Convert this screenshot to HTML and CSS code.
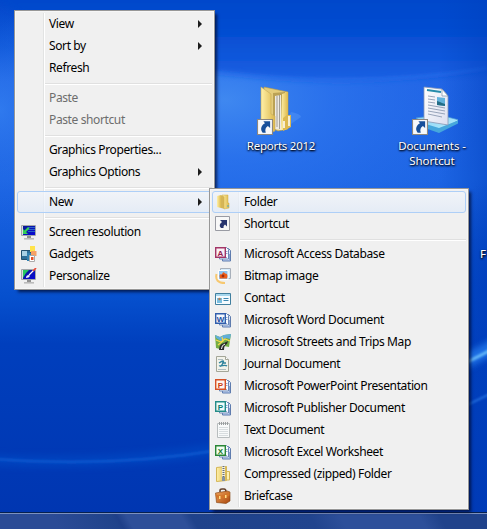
FILE: index.html
```html
<!DOCTYPE html>
<html lang="en">
<head>
<meta charset="utf-8">
<title>Desktop</title>
<link rel="stylesheet" href="styles.css">
</head>
<body>
<svg width="0" height="0" class="defs" aria-hidden="true">
  <defs>
    <linearGradient id="gold" x1="0" x2="1"><stop offset="0" stop-color="#fff0a8"/><stop offset="1" stop-color="#dcb84c"/></linearGradient>
    <linearGradient id="page" x1="0" y1="0" x2="1" y2="1"><stop offset="0" stop-color="#fff"/><stop offset="1" stop-color="#dcdff0"/></linearGradient>
    <linearGradient id="screen" x1="0" y1="0" x2="1" y2="1"><stop offset="0" stop-color="#0b1b92"/><stop offset="1" stop-color="#0909d8"/></linearGradient>
    <linearGradient id="tray" x1="0" y1="0" x2="1" y2="1"><stop offset="0" stop-color="#88cdf5"/><stop offset="1" stop-color="#b7f1fb"/></linearGradient>
    <linearGradient id="leather" x1="0" y1="0" x2="1" y2="1"><stop offset="0" stop-color="#f1a55b"/><stop offset="1" stop-color="#a9460d"/></linearGradient>
    <symbol id="monitor" viewBox="0 0 16 16">
      <path d="M.5 1.500h14v10h-14z" fill="#d9dcde" stroke="#a4a8aa"/>
      <path d="M2 2h12v9H2z" fill="url(#screen)"/>
      <path d="M6 12h4v2H6z" fill="#919191"/><path d="M3 14h10v1.600H3z" fill="#bbb"/>
    </symbol>
    <symbol id="office" viewBox="0 0 16 16">
      <path d="M7.500 2.500h6l2 2v10.500h-8z" fill="#d9e5f8" stroke="#5f7cae"/>
      <path d="M4.500 1.500h7l2 2v9.500h-9z" fill="#f8fbff" stroke="#6c88b7"/>
      <path d="M11 5.500h1.500M11 7.500h1.500M7 11.500h5M14.500 8v6M8 14.500h7" stroke="#8da6d2"/>
    </symbol>
    <symbol id="link" viewBox="0 0 15 15">
      <path d="M.5.5h14v14H.5z" fill="#f7f8fb" stroke="#8d8780"/>
      <path d="M6 2h6.300v6.500L10.200 6.500C8 8 7.300 9.700 8.200 12.800H5.300C2.600 9.500 4 6 7.500 4z" fill="#174f9b"/>
    </symbol>
  </defs>
</svg>
<main class="desktop">
  <svg class="wallpaper" viewBox="0 0 487 529" preserveAspectRatio="none" aria-hidden="true">
    <defs>
      <linearGradient id="base" x1="0" y1="0" x2="0" y2="1">
        <stop offset="0" stop-color="#0044c8"/><stop offset=".09" stop-color="#0750d4"/><stop offset=".155" stop-color="#2063e4"/><stop offset=".34" stop-color="#1d65e4"/><stop offset=".56" stop-color="#0650ce"/><stop offset=".65" stop-color="#003fbd"/><stop offset="1" stop-color="#0035b0"/>
      </linearGradient>
      <radialGradient id="glow" gradientUnits="userSpaceOnUse" cx="0" cy="0" r="1" gradientTransform="translate(225 100) scale(260 150)">
        <stop offset="0" stop-color="#4791f3" stop-opacity=".8"/><stop offset=".4" stop-color="#2f78f0" stop-opacity=".65"/><stop offset="1" stop-color="#2870ed" stop-opacity="0"/>
      </radialGradient>
      <radialGradient id="left" gradientUnits="userSpaceOnUse" cx="0" cy="0" r="1" gradientTransform="translate(0 110) scale(90 120)">
        <stop offset="0" stop-color="#3480f1" stop-opacity=".75"/><stop offset="1" stop-color="#1c63df" stop-opacity="0"/>
      </radialGradient>
      <linearGradient id="rightShade"><stop offset=".9" stop-color="#0044c0" stop-opacity="0"/><stop offset="1" stop-color="#0040bd" stop-opacity=".5"/></linearGradient>
      <radialGradient id="corner" gradientUnits="userSpaceOnUse" cx="0" cy="0" r="1" gradientTransform="translate(500 290) scale(75 110)">
        <stop offset="0" stop-color="#003dbb" stop-opacity=".9"/><stop offset="1" stop-color="#003dbb" stop-opacity="0"/>
      </radialGradient>
      <linearGradient id="cap" x1="0" y1="0" x2="0" y2="1"><stop offset="0" stop-color="#0043c7"/><stop offset=".5" stop-color="#044dd1"/><stop offset="1" stop-color="#1a60e3"/></linearGradient>
      <filter id="soft" x="-20%" y="-100%" width="140%" height="300%"><feGaussianBlur stdDeviation="3"/></filter>
      <filter id="fine" x="-20%" y="-100%" width="140%" height="300%"><feGaussianBlur stdDeviation=".8"/></filter>
    </defs>
    <path d="M0 0h487v529H0z" fill="url(#base)"/>
    <path d="M0 0h487v529H0z" fill="url(#glow)"/>
    <path d="M0 0h100v260H0z" fill="url(#left)"/>
    <path d="M-20-20H510V65Q370 90 243 75Q90 62-20-10Z" fill="url(#cap)" filter="url(#soft)"/>
    <path d="M215 72Q360 89 487 68" fill="none" stroke="#2d72ee" stroke-width="3" opacity=".45" filter="url(#fine)"/>
    <path d="M0 0h487v529H0z" fill="url(#rightShade)"/>
    <path d="M0 0h487v529H0z" fill="url(#corner)"/>
    <path d="M-5 460Q110 466 220 449" fill="none" stroke="#0056d0" stroke-width="12" opacity=".35" filter="url(#soft)"/>
    <path d="M-5 459Q110 468 220 450" fill="none" stroke="#1463d8" stroke-width="2" opacity=".8" filter="url(#fine)"/>
    <path d="M460 364Q478 355 500 343" fill="none" stroke="#2b83f5" stroke-width="14" opacity=".7" filter="url(#soft)"/>
    <path d="M465 363Q478 357 500 345" fill="none" stroke="#66bafa" stroke-width="3" filter="url(#fine)"/>
    <path d="M465 406Q478 400 500 389" fill="none" stroke="#2b79e5" stroke-width="2" opacity=".8" filter="url(#fine)"/>
  </svg>

  <div class="shortcut reports">
    <svg class="shortcut-icon" viewBox="0 0 48 52">
      <path d="M28 47l20-14q0-3-10-5z" fill="#79b2ff" opacity=".25"/>
      <path d="M11 3l24 5v37l-10 2-14-7z" fill="#e5cd7b" stroke="#b99b43" stroke-width=".6"/>
      <path d="M20 9l12-1v36l-12 1z" fill="#bba255"/>
      <path d="M22 12l6-1v35l-6-1z" fill="#eeeae2"/><path d="M24 12v31M26.500 11v34" stroke="#8e8b82" stroke-width=".8"/>
      <path d="M29 10l6-2v35l-2 3h-5z" fill="url(#gold)"/>
      <path d="M34 31h4v12l-8 4V34z" fill="#ddb94f"/><path d="M36 32v10M31 37v7" stroke="#fff" stroke-width="1.500"/>
      <path d="M8 3l10 7v20l4 2v15l-3 1L8 42z" fill="url(#gold)" stroke="#c6a957" stroke-width=".6"/>
      <use href="#link" x="4" y="35" width="16" height="16"/>
    </svg>
    <span>Reports 2012</span>
  </div>
  <div class="shortcut documents">
    <svg class="shortcut-icon" viewBox="0 0 48 52">
      <path d="M6 34l24-3 19 5-20 12z" fill="url(#tray)" stroke="#4a9bd2" stroke-width=".7"/>
      <path d="M9 38l20 6 20-8v3L29 49 9 42z" fill="#46a7dc"/>
      <path d="M14 3l18 2 6 7v29l-24-4z" fill="url(#page)" stroke="#8998b4" stroke-width=".8"/>
      <path d="M32 5v7h6z" fill="#fff" stroke="#788da4" stroke-width=".7"/>
      <path d="M17 6l14 2" stroke="#278caa" stroke-width="1.800"/>
      <path d="M18 12l7 1M18 15l7 1M18 18l7 1M18 21l17 3M18 24l17 3M18 27l17 3M18 30l14 3" stroke="#8290a9" stroke-width=".8"/>
      <path d="M27 13l8 1v8l-8-1z" fill="#62b2dc"/><path d="M27 17l3 1 2 1 3 1v2l-8-1z" fill="#236c86"/>
      <use href="#link" x="2" y="35" width="16" height="16"/>
    </svg>
    <span>Documents -</span>
    <span>Shortcut</span>
  </div>
  <div class="shortcut clipped"><span>F</span></div>
  <footer class="taskbar"></footer>

  <nav class="menu context">
    <div class="row"><i class="icon"></i><span>View</span><b class="arrow"></b></div>
    <div class="row"><i class="icon"></i><span>Sort by</span><b class="arrow"></b></div>
    <div class="row"><i class="icon"></i><span>Refresh</span></div>
    <hr>
    <div class="row disabled"><i class="icon"></i><span>Paste</span></div>
    <div class="row disabled"><i class="icon"></i><span>Paste shortcut</span></div>
    <hr>
    <div class="row"><i class="icon"></i><span>Graphics Properties...</span></div>
    <div class="row"><i class="icon"></i><span>Graphics Options</span><b class="arrow"></b></div>
    <hr>
    <div class="row active"><i class="icon"></i><span>New</span><b class="arrow"></b></div>
    <hr>
    <div class="row"><svg class="icon" viewBox="0 0 16 16"><use href="#monitor"/><path d="M7 3.500h7M7 5.500h7M7 7.500h7" stroke="#2a62c8"/><path d="M2 10V5l1.500 1.500L7 3l1.500 1.500L5 8l2 2z" fill="#35d055"/></svg><span>Screen resolution</span></div>
    <div class="row"><svg class="icon" viewBox="0 0 16 16"><path d="M.5 4.500h9v9h-9z" fill="#2d6e98" stroke="#22506e"/><path d="M1 5h5v5H1z" fill="#a7d0e4"/><path d="M9 0h5v6H9z" fill="#ffe34a"/><path d="M10 5h5.500v5H10z" fill="#f6a064"/><path d="M6 7h4v8H6z" fill="#3181b0"/><path d="M8.500 9.500h5v6h-5z" fill="#fff" stroke="#aaa"/><path d="M10 11h2.500v3H10z" fill="#e55025"/></svg><span>Gadgets</span></div>
    <div class="row"><svg class="icon" viewBox="0 0 16 16"><use href="#monitor"/><path d="M2 2h6L5 5l-3 5z" fill="#25c860"/><path d="M5 10q0-3 3-3l1 1q-1 2-4 2z" fill="#eef3ff"/><path d="M8 7l5-5" stroke="#fff" stroke-width="1.200"/><path d="M12 3l3-3" stroke="#ed4937" stroke-width="1.600"/></svg><span>Personalize</span></div>
  </nav>

  <nav class="menu submenu">
    <div class="row active"><svg class="icon" viewBox="0 0 16 16"><path d="M2 2l4-1v13l-4-1z" fill="url(#gold)"/><path d="M6 1l4 2v12l-4-1z" fill="#d5b557"/><path d="M7 1h6v8h1v5l-5 1V3z" fill="url(#gold)" stroke="#d0ae4b" stroke-width=".5"/><path d="M13 11v2" stroke="#49a5d0"/></svg><span>Folder</span></div>
    <div class="row"><svg class="icon" viewBox="0 0 16 16"><path d="M.5.5h14v14H.5z" fill="#f8f8f8" stroke="#999ba3"/><path d="M5 4h7v6.500L10 8.500Q8 9.500 8.500 12H6q-3-3 1-6z" fill="#27356f"/></svg><span>Shortcut</span></div>
    <hr>
    <div class="row"><svg class="icon" viewBox="0 0 16 16"><use href="#office"/><path d="M.7 1.700h9.600v9.600H.7z" fill="#faf0f5" stroke="#a33567" stroke-width="1.400"/><text x="2.600" y="9.600" class="letter access">A</text></svg><span>Microsoft Access Database</span></div>
    <div class="row"><svg class="icon" viewBox="0 0 16 16"><path d="M5.500.5h10v10h-10z" fill="#d6ecfc" stroke="#a8b0ba"/><path d="M3.500 2.500h9.500v9H3.500z" fill="#8dc4f1" stroke="#fff"/><path d="M5 10.500q-1.500-5 2-4 1-4 3-1 3.500 0 2 5z" fill="#ee5c18"/><circle cx="8" cy="8" r="1.400" fill="#9d2d15"/><path d="M1.500 6Q-.5 15 10 15" fill="none" stroke="#f7c86f" stroke-width="2"/></svg><span>Bitmap image</span></div>
    <div class="row"><svg class="icon" viewBox="0 0 16 16"><path d="M.5 3.500h15v11H.5z" fill="#f5fbff" stroke="#417f9f"/><path d="M1 4h14v2H1z" fill="#a5d6ed"/><path d="M2 8h5v5H2z" fill="#79bfe2"/><circle cx="4.500" cy="9" r="1.300" fill="#ad825f"/><path d="M8.500 8.500h5M8.500 10.500h5" stroke="#3e88b1"/></svg><span>Contact</span></div>
    <div class="row"><svg class="icon" viewBox="0 0 16 16"><use href="#office"/><path d="M.7 1.700h9.600v9.600H.7z" fill="#f4f8ff" stroke="#315eac" stroke-width="1.400"/><text x="1.700" y="9.600" class="letter word">W</text></svg><span>Microsoft Word Document</span></div>
    <div class="row"><svg class="icon" viewBox="0 0 16 16"><path d="M0 1l5 2 4-2 7-1-2 13-5-1-4 3-4-1z" fill="#74ad45"/><path d="M0 1l5 2 4-2 7-1-1 5-4-1-5 3-5-3z" fill="#61aedb"/><path d="M1 6l5 2 4-3 5 2M7 3l1 4-5 4" stroke="#f7d94f" stroke-width="1.200" fill="none"/><path d="M4 16q0-6 5-7l4-2-1 3q-3 1-3 6z" fill="#292b2a"/><path d="M6.500 15q0-4 3.500-5" stroke="#fff" fill="none"/></svg><span>Microsoft Streets and Trips Map</span></div>
    <div class="row"><svg class="icon" viewBox="0 0 16 16"><path d="M1.500.5h9l3 3v12h-12z" fill="#f3f3eb" stroke="#a4a698"/><path d="M10.500.5v3h3" fill="#fff" stroke="#a4a698"/><path d="M3 3.500h5M3 13.500h8" stroke="#aebdc0"/><path d="M4 7q6-4 4 0t-3 3q6-1 7 0M7 7h4" fill="none" stroke="#30849d" stroke-width="1.300"/></svg><span>Journal Document</span></div>
    <div class="row"><svg class="icon" viewBox="0 0 16 16"><use href="#office"/><path d="M.7 1.700h9.600v9.600H.7z" fill="#fff5ef" stroke="#d65126" stroke-width="1.400"/><text x="2.800" y="9.600" class="letter power">P</text></svg><span>Microsoft PowerPoint Presentation</span></div>
    <div class="row"><svg class="icon" viewBox="0 0 16 16"><use href="#office"/><path d="M.7 1.700h9.600v9.600H.7z" fill="#effcfa" stroke="#248c88" stroke-width="1.400"/><text x="2.800" y="9.600" class="letter publisher">P</text></svg><span>Microsoft Publisher Document</span></div>
    <div class="row"><svg class="icon" viewBox="0 0 16 16"><path d="M2.500 1.500h12v14h-12z" fill="#f8fafa" stroke="#b8bdbe"/><path d="M4 5.500h9M4 7.500h9M4 9.500h9M4 11.500h9M4 13.500h9" stroke="#cfd5d8" stroke-width=".8"/><path d="M4.500 0v3M6.500 0v3M8.500 0v3M10.500 0v3M12.500 0v3" stroke="#9a9e9f"/></svg><span>Text Document</span></div>
    <div class="row"><svg class="icon" viewBox="0 0 16 16"><use href="#office"/><path d="M.7 1.700h9.600v9.600H.7z" fill="#f3fff1" stroke="#298636" stroke-width="1.400"/><text x="2.800" y="9.600" class="letter excel">X</text></svg><span>Microsoft Excel Worksheet</span></div>
    <div class="row"><svg class="icon" viewBox="0 0 16 16"><path d="M1.500 1.500l10-1v14l-10 1z" fill="url(#gold)" stroke="#d4b657"/><path d="M11.500 5.500h3v8.500h-3z" fill="#fff1b2" stroke="#d4b657"/><path d="M8.500 0v15" stroke="#f3efd9" stroke-width="3"/><path d="M8.500 0v11" stroke="#686f79" stroke-width="2" stroke-dasharray="1 1"/><path d="M7 11h3v4H7z" fill="#8693a2"/></svg><span>Compressed (zipped) Folder</span></div>
    <div class="row"><svg class="icon" viewBox="0 0 16 16"><path d="M5 4V2.500Q5 1 7 1h2q2 0 2 3" fill="none" stroke="#63402b" stroke-width="1.500"/><path d="M.5 5l12-2 2.500 1v9l-4 2.500-9.500-1z" fill="url(#leather)" stroke="#81400e" stroke-width=".6"/><path d="M.5 6q6 4 14-2v3.500Q8 12 1 9z" fill="#d47629"/><path d="M4 8h1.500v3H4zM10 7h1.500v3H10z" fill="#ffe087"/></svg><span>Briefcase</span></div>
  </nav>
</main>
</body>
</html>
```
FILE: styles.css
```css
* { box-sizing: border-box; }
body { margin: 0; font: 12px/22px "Noto Sans", "Open Sans", sans-serif; overflow: hidden; }
.defs { position: absolute; }
.desktop { position: relative; width: 487px; height: 529px; overflow: hidden; background: #0044c3; }
.wallpaper { position: absolute; inset: 0; width: 100%; height: 100%; }

.menu {
  position: absolute;
  padding: 2px;
  border: 1px solid #979797;
  background: linear-gradient(to right, transparent 28px, #e2e3e3 28px 29px, #fff 29px 30px, transparent 30px) 0 2px / 100% calc(100% - 4px) no-repeat, #f0f0f0;
  box-shadow: inset 0 0 0 1px #f6f6f6, 3px 3px 3px -1px rgba(0, 8, 40, .75);
}
.context { left: 14px; top: 10px; width: 201px; }
.submenu { left: 209px; top: 188px; width: 260px; }
.row {
  display: flex;
  align-items: center;
  height: 22px;
  padding: 0 9px 0 3px;
  border: 1px solid transparent;
  border-radius: 3px;
  color: #000;
  white-space: nowrap;
}
.row span { letter-spacing: -.38px; }
.icon { flex: none; width: 16px; height: 16px; margin-right: 12px; }
.submenu .icon { margin: 0 13px 0 -1px; }
.active { border-color: #aecff7; background: linear-gradient(rgba(241, 245, 251, .7), rgba(224, 234, 248, .7)); }
.disabled { color: #6d6d6d; }
.arrow { margin-left: auto; border: solid transparent; border-width: 4px 0 4px 4px; border-left-color: #1c1c1c; }
.menu hr { height: 2px; margin: 4px 0 2px 28px; border: 0; border-top: 1px solid #e0e0e0; background: #fff; }

.letter { font: bold 8px "Liberation Sans", sans-serif; }
.access { fill: #96194d; }
.word { fill: #214d9c; }
.power { fill: #cb3e12; }
.publisher { fill: #087b75; }
.excel { fill: #17752a; }

.shortcut {
  position: absolute;
  display: flex;
  flex-direction: column;
  align-items: center;
  width: 80px;
  color: #fff;
  font-size: 11.5px;
  line-height: 15px;
  text-align: center;
  letter-spacing: -.1px;
  text-shadow: 0 1px 2px #000, 1px 1px 2px #001a50;
}
.shortcut-icon { width: 48px; height: 52px; margin-bottom: 2px; }
.reports { left: 241px; top: 84px; letter-spacing: -.25px; }
.reports .shortcut-icon { margin-left: -8px; }
.documents { left: 392px; top: 84px; }
.documents .shortcut-icon { margin-left: 4px; }
.clipped { left: 480px; top: 246px; width: 10px; align-items: flex-start; }

.taskbar {
  position: absolute;
  left: 0;
  right: 0;
  bottom: 0;
  height: 17px;
  border-top: 1px solid #07204f;
  background: linear-gradient(60deg, #2b4b96 0 12%, #20438b 24%, #1e3f89 25%, #2e4f99 27% 38%, #1f428b 40%, #21448e 64%, #2d4f9a 70% 86%, #20428b 90%);
  box-shadow: inset 0 1px #7c91bf;
}
```
